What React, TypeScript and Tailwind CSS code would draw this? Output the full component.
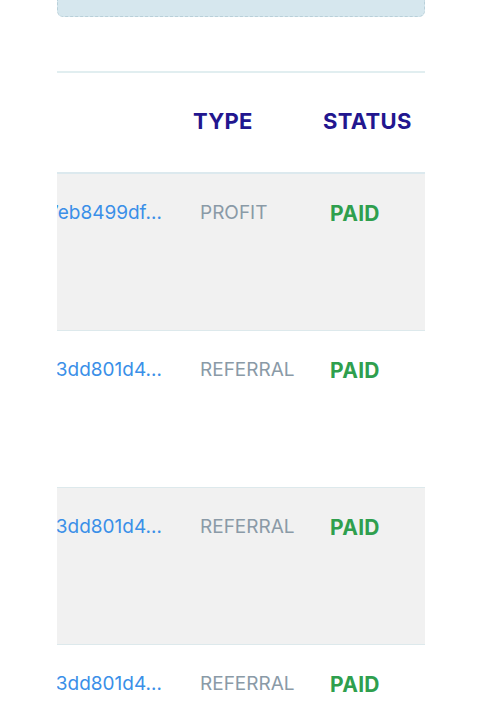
import React from 'react'

type Row = {
  hash: string
  type: string
  status: string
}

const rows: Row[] = [
  { hash: '0x27eb8499df', type: 'PROFIT', status: 'PAID' },
  { hash: '0x83dd801d4', type: 'REFERRAL', status: 'PAID' },
  { hash: '0x83dd801d4', type: 'REFERRAL', status: 'PAID' },
  { hash: '0x83dd801d4', type: 'REFERRAL', status: 'PAID' },
]

const App = () => {
  return (
    <div className="w-[483px] h-[720px] bg-white overflow-hidden font-['Inter',sans-serif]">
      <div className="ml-[57px] w-[368px]">
        {/* summary box (scrolled off top) */}
        <div className="h-[17px] bg-[#d6e7ee] border border-t-0 border-dashed border-[#b9d0d9] rounded-b-md"></div>

        <div className="h-[54px]"></div>

        {/* table */}
        <div className="border-t-2 border-[#e1eef0]">
          <div className="grid grid-cols-[136px_130px_102px] h-[101px] items-center border-b-2 border-[#dce9ee]">
            <div></div>
            <div className="text-[22px] font-bold text-[#22168f] tracking-[0.3px] -mt-[2px]">TYPE</div>
            <div className="text-[22px] font-bold text-[#22168f] tracking-[0.3px] -mt-[2px]">STATUS</div>
          </div>

          {rows.map((r, i) => (
            <div
              key={i}
              className={`grid grid-cols-[136px_130px_102px] h-[157px] border-b border-[#dde9ec] ${
                i % 2 === 0 ? 'bg-[#f1f1f1]' : 'bg-white'
              }`}
            >
              <div className="flex justify-end overflow-hidden pr-[31px] pt-[25px] whitespace-nowrap">
                <span className="text-[19px] text-[#3a8fe8]">{r.hash}…</span>
              </div>
              <div className="pl-[7px] pt-[25px] text-[19px] text-[#8a9aa7]">{r.type}</div>
              <div className="pl-[7px] pt-[24px] text-[21px] font-bold text-[#2f9f4e] tracking-[0.3px]">{r.status}</div>
            </div>
          ))}
        </div>
      </div>
    </div>
  )
}

export default App
